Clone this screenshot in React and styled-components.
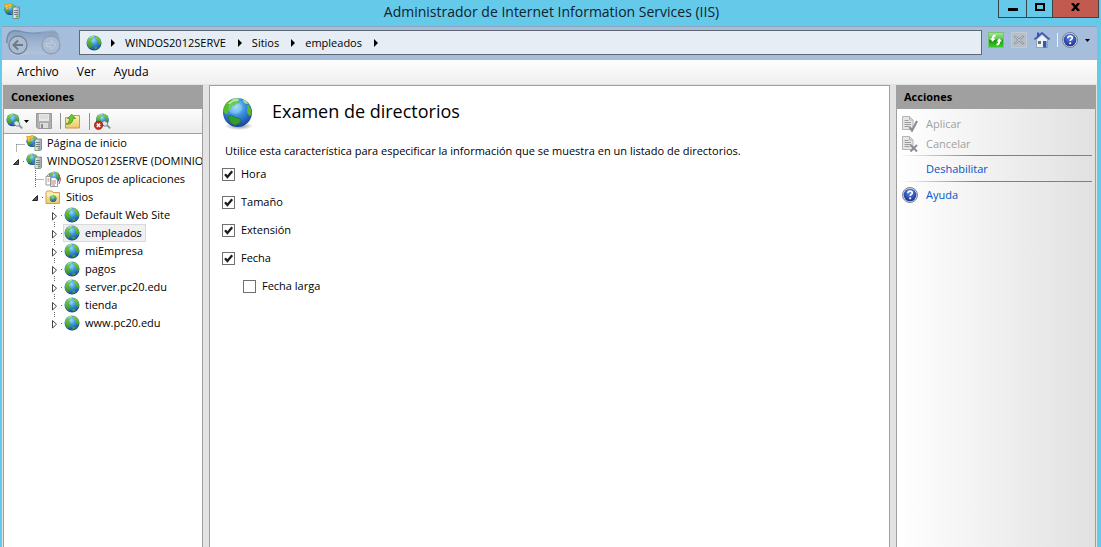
import React, { useState } from 'react';
import styled, { createGlobalStyle } from 'styled-components';

const GlobalStyle = createGlobalStyle`
  * { box-sizing: border-box; }
  body {
    margin: 0;
    background: #65caea;
    color: #000;
    font-family: "Open Sans", "Noto Sans", sans-serif;
    font-size: 11px;
    line-height: 18px;
  }
  button, input { font: inherit; color: inherit; }
  ul, ol { margin: 0; padding: 0; list-style: none; }
`;

/* ---------- window frame ---------- */

const Window = styled.div`
  display: flex;
  flex-direction: column;
  min-height: 100vh;
  background: #65caea;
`;

const TitleBar = styled.header`
  display: grid;
  grid-template-columns: 1fr auto 1fr;
  height: 26px;
  padding: 0 2px 0 4px;
`;

const AppIcon = styled.span`
  display: flex;
  padding-top: 3px;
`;

const WindowTitle = styled.h1`
  margin: 0;
  font-size: 14px;
  font-weight: 400;
  line-height: 24px;
  color: #10222a;
  white-space: nowrap;
`;

const WindowButtons = styled.div`
  display: flex;
  justify-content: flex-end;
`;

const WindowButton = styled.button`
  display: flex;
  align-items: center;
  justify-content: center;
  width: ${(p) => p.$width}px;
  height: 18px;
  margin-left: -1px;
  padding: 0 0 3px;
  border: 1px solid #38454b;
  border-top: 0;
  background: ${(p) => (p.$danger ? '#c25a50' : 'transparent')};
`;

const Frame = styled.div`
  flex: 1;
  display: flex;
  flex-direction: column;
  margin: 0 4px 0 2px;
  background: #e3e3e3;
`;

/* ---------- address bar ---------- */

const AddressRow = styled.div`
  display: flex;
  align-items: flex-start;
  height: 34px;
  padding: 3px 7px 0 4px;
  border-top: 1px solid #8ba6bf;
  background: #a6bedb;
`;

const History = styled.div`
  display: grid;
  width: 56px;
  height: 27px;
  margin-right: 17px;
  > * { grid-area: 1 / 1; }
`;

const HistoryButtons = styled.div`
  display: flex;
  justify-content: space-between;
  align-items: flex-end;
  padding: 0 1px 2px 2px;
`;

const IconButton = styled.button`
  display: flex;
  align-items: center;
  justify-content: center;
  padding: 0;
  border: 0;
  background: none;
`;

const Address = styled.nav`
  flex: 1;
  display: flex;
  align-items: center;
  height: 25px;
  padding-left: 6px;
  border: 1px solid #5f6873;
  background: #e6edf5;
`;

const Crumbs = styled.ol`
  display: flex;
  align-items: center;
  gap: 12px;
  padding-left: 9px;
`;

const Crumb = styled.li`
  display: flex;
  align-items: center;
  gap: 10px;
`;

const CrumbLink = styled.a`
  color: #000;
  text-decoration: none;
`;

const AddressTools = styled.div`
  display: flex;
  align-items: center;
  gap: 7px;
  height: 20px;
  padding-left: 6px;
`;

const Divider = styled.span`
  width: 1px;
  height: 14px;
  background: #eef2f7;
`;

const HelpGroup = styled.span`
  display: flex;
  align-items: center;
  gap: 4px;
`;

/* ---------- menu ---------- */

const MenuBar = styled.nav`
  display: flex;
  align-items: center;
  height: 24px;
  padding-left: 6px;
  background: linear-gradient(#fefefe, #efefef);
`;

const MenuItem = styled.button`
  padding: 0 9px;
  border: 0;
  background: none;
  font-size: 12px;
`;

/* ---------- panels ---------- */

const Body = styled.div`
  flex: 1;
  display: flex;
  gap: 6px;
  padding: 1px 1px 0;
`;

const SidePanel = styled.aside`
  flex: none;
  display: flex;
  flex-direction: column;
  width: 200px;
  border: solid #a0a0a0;
  border-width: 0 1px;
  background: ${(p) => (p.$shaded ? 'linear-gradient(90deg, #fff, #e1e1e1)' : '#fff')};
`;

const PanelTitle = styled.h2`
  margin: 0;
  padding: 0 7px;
  font-size: 11px;
  font-weight: 700;
  line-height: 24px;
  background: #a0a0a0;
`;

const ConnectionTools = styled.div`
  display: flex;
  align-items: center;
  height: 25px;
  padding-left: 2px;
  border-bottom: 1px solid #a0a0a0;
  background: linear-gradient(#fdfdfd, #ececec);
`;

const ToolGroup = styled.span`
  display: flex;
  align-items: center;
  & + & {
    margin-left: 8px;
    padding-left: 4px;
    border-left: 1px solid #909090;
  }
`;

const ConnectGroup = styled.span`
  display: flex;
  align-items: center;
  gap: 1px;
  margin-right: 7px;
`;

/* ---------- tree ---------- */

const Tree = styled.ul`
  overflow: hidden;
`;

const TreeRow = styled.li`
  display: flex;
  height: 18px;
  padding-left: ${(p) => 3 + p.$level * 19}px;
`;

const TreeGuides = styled.svg`
  flex: none;
  width: 18px;
  height: 18px;
`;

const TreeLabel = styled.button`
  display: flex;
  align-items: center;
  gap: 5px;
  height: 18px;
  padding: 0 3px 0 0;
  border: 1px solid ${(p) => (p.$selected ? '#dadada' : 'transparent')};
  background: ${(p) => (p.$selected ? '#f0f0f0' : 'none')};
  line-height: 16px;
  white-space: nowrap;
`;

/* ---------- feature page ---------- */

const Page = styled.main`
  flex: 1;
  min-width: 0;
  padding: 11px 12px;
  border: 1px solid #a0a0a0;
  border-bottom: 0;
  background: #fff;
`;

const PageHeader = styled.div`
  display: flex;
  align-items: center;
  gap: 18px;
`;

const PageTitle = styled.h2`
  margin: 0;
  padding-bottom: 6px;
  font-size: 18px;
  font-weight: 400;
  line-height: 26px;
`;

const Description = styled.p`
  margin: 12px 0 0 3px;
`;

const Options = styled.div`
  display: flex;
  flex-direction: column;
`;

const Option = styled.label`
  display: flex;
  align-items: center;
  gap: 6px;
  height: 28px;
  padding-left: ${(p) => (p.$nested ? 21 : 0)}px;
`;

const CheckBox = styled.span`
  display: grid;
  width: 13px;
  height: 13px;
  > * { grid-area: 1 / 1; }
  svg { pointer-events: none; visibility: hidden; }
  input:checked + svg { visibility: visible; }
`;

const CheckInput = styled.input`
  appearance: none;
  width: 13px;
  height: 13px;
  margin: 0;
  border: 1px solid #707070;
  background: #fff;
`;

/* ---------- actions ---------- */

const ActionList = styled.ul`
  padding: 5px 3px;
`;

const ActionItem = styled.li`
  ${(p) => p.$ruled && `
    margin-top: 1px;
    padding: 3px 0 1px;
    border-top: 1px solid;
    border-image: linear-gradient(90deg, transparent, #808080 40%) 1;
  `}
`;

const ActionButton = styled.button`
  display: flex;
  align-items: center;
  gap: 8px;
  width: 100%;
  height: 20px;
  padding: 0 0 0 2px;
  border: 0;
  background: none;
  color: #0055c8;
  text-align: left;
  &:disabled { color: #a0a0a0; }
`;

const ActionIcon = styled.span`
  display: flex;
  width: 16px;
  height: 16px;
`;

/* ---------- icons ---------- */

const HiddenDefs = styled.svg`
  position: absolute;
`;

const Defs = () => (
  <HiddenDefs width="0" height="0" aria-hidden="true">
    <defs>
      <radialGradient id="sea" cx="0.45" cy="0.3" r="0.72">
        <stop offset="0" stopColor="#93dcfb" />
        <stop offset="0.45" stopColor="#3a8ee0" />
        <stop offset="1" stopColor="#173f9c" />
      </radialGradient>
      <linearGradient id="land" x1="0" y1="0" x2="0" y2="1">
        <stop offset="0" stopColor="#8ad64a" />
        <stop offset="1" stopColor="#2f9426" />
      </linearGradient>
      <linearGradient id="steel" x1="0" y1="0" x2="1" y2="0">
        <stop offset="0" stopColor="#f7f8f9" />
        <stop offset="1" stopColor="#9ba3ab" />
      </linearGradient>
      <linearGradient id="folder" x1="0" y1="0" x2="0" y2="1">
        <stop offset="0" stopColor="#fdf0b4" />
        <stop offset="1" stopColor="#eec866" />
      </linearGradient>
      <linearGradient id="pill" x1="0" y1="0" x2="0" y2="1">
        <stop offset="0" stopColor="#849fc0" />
        <stop offset="0.4" stopColor="#9ab1cd" />
        <stop offset="1" stopColor="#b3c6dd" />
      </linearGradient>
      <linearGradient id="pillEdge" x1="0" y1="0" x2="1" y2="0">
        <stop offset="0" stopColor="#6f8bae" />
        <stop offset="0.6" stopColor="#7b96b8" />
        <stop offset="1" stopColor="#a6bedb" stopOpacity="0" />
      </linearGradient>
      <radialGradient id="helpBlue" cx="0.5" cy="0.3" r="0.7">
        <stop offset="0" stopColor="#5f8be8" />
        <stop offset="1" stopColor="#152f94" />
      </radialGradient>
      <linearGradient id="refreshGreen" x1="0" y1="0" x2="0" y2="1">
        <stop offset="0" stopColor="#a9e59a" />
        <stop offset="0.45" stopColor="#5cc44a" />
        <stop offset="0.5" stopColor="#16940c" />
        <stop offset="1" stopColor="#3fcf2c" />
      </linearGradient>
      <radialGradient id="shade">
        <stop offset="0" stopColor="#555" stopOpacity="0.7" />
        <stop offset="1" stopColor="#555" stopOpacity="0" />
      </radialGradient>
    </defs>
  </HiddenDefs>
);

const GlobeShape = () => (
  <>
    <circle cx="8" cy="8" r="7.5" fill="url(#sea)" />
    <path d="M1.300 5.400C2.200 3.100 4.300 1.300 6.800.900L7.800 2.100 6.300 3.300 6.600 4.500 4.800 5.400 4.900 7.300 6.600 8.600 6.900 10.300 5.300 12.300 4.200 13.500C2.600 12.200 1 10.200.900 7.700Z" fill="url(#land)" />
    <path d="M10 1.200C12.700 2 14.600 4.200 15.200 7L14.900 9.300 13.600 10.600 12.700 9 11.200 8.300 10.800 6.600 12 5.400 10.300 4.500 9.300 2.600Z" fill="url(#land)" />
    <path d="M8.700 11.400 11 11.700 11.700 12.900 9.600 14.500 8.200 13.400Z" fill="#3ba32d" />
    <path d="M4 3.300C5.200 2 6.700 1.500 8.300 1.600" fill="none" stroke="#fff" strokeOpacity="0.500" strokeWidth="0.900" />
  </>
);

const Globe = () => (
  <svg width="16" height="16" viewBox="0 0 16 16" aria-hidden="true"><GlobeShape /></svg>
);

const BigGlobe = () => (
  <svg width="32" height="33" viewBox="0 0 32 33" aria-hidden="true">
    <ellipse cx="17" cy="29" rx="14" ry="4" fill="url(#shade)" />
    <circle cx="15.500" cy="15.500" r="14.500" fill="url(#sea)" />
    <path d="M2 9.500C4 5.500 7.500 2.300 12 1.400l5 .2-1 2.600 1.600 1.700-3.400 1-1.500 2-2.800.4-.8 3.100-2.600 1.400-1.500 3.700-2.300-1.100L1.200 13.800Z" fill="#56bd2c" />
    <path d="M12 1.400l5 .2-1 2.600-4.800.6-3.400 2.400-2.300-.4Z" fill="#c9ecc0" opacity="0.800" />
    <path d="M21 2.600l3.500 2 1.600 2.400-2.300-.2-2.300-1.800Z" fill="#b8e38a" />
    <path d="M26.500 7.500l2.400 4.600.5 4.400-1.400 2.500-2.300-1.700-.9-4.400.9-1.700-.8-2Z" fill="#5cba2a" />
    <path d="M6 19.200l3.600-.9 3 1.800 4.800 1.300 1.800 2-1.800 3.100-4.300 1.800-4.600-2.400Z" fill="#359b2b" stroke="#1d6f36" strokeWidth="0.600" />
    <ellipse cx="13" cy="11" rx="7" ry="6" fill="#c7f1ff" opacity="0.250" />
  </svg>
);

const ServerShape = () => (
  <>
    <path d="M9 5.500l1.500-1.500H15.500V14.500L14.500 15.500H9Z" fill="url(#steel)" stroke="#737b83" strokeWidth="0.800" />
    <path d="M10 7.500h4M10 9.500h4M10 11.500h4" stroke="#6b747c" strokeWidth="0.900" />
    <rect x="12" y="12.800" width="2" height="1.500" fill="#55b53a" />
  </>
);

const ServerGlobe = ({ home }) => (
  <svg width="16" height="16" viewBox="0 0 16 16" aria-hidden="true">
    <g transform="scale(.78)"><GlobeShape /></g>
    {home && (
      <path d="M.5 1.200 3.600 1.700 6.500.500 8 2 6.200 3.600 5 3 3.600 4.200 4.300 6.200 2.400 6.700Z" fill="#ffc933" stroke="#e0951a" strokeWidth="0.700" />
    )}
    <ServerShape />
  </svg>
);

const AppPool = () => (
  <svg width="16" height="16" viewBox="0 0 16 16" aria-hidden="true">
    <g transform="translate(3 0) scale(.78)"><GlobeShape /></g>
    <path d="M13.500 3.500 15.500 8l-1.500 5" fill="none" stroke="#c9423c" strokeWidth="1" />
    <path d="M1 5.500h5v8.500H1ZM5.500 6.500H10L12.500 9v6.500h-7Z" fill="#fff" stroke="#8a9298" strokeWidth="0.900" />
    <path d="M2.500 8h2M2.500 10h2M7 10h4M7 12h4M7 14h3" stroke="#a5605a" strokeWidth="0.800" />
    <path d="M2 5 4 2.500l3.500.500" fill="none" stroke="#8a9298" />
  </svg>
);

const SitesFolder = () => (
  <svg width="16" height="16" viewBox="0 0 16 16" aria-hidden="true">
    <path d="M1 3.500 2 2h5l1 1.500h6.500v11H1Z" fill="url(#folder)" stroke="#c89b3c" strokeWidth="0.900" />
    <path d="M1.500 6h12.500" stroke="#fff8d8" />
    <g transform="translate(4.500 6) scale(.45)"><GlobeShape /></g>
  </svg>
);

const PlugGlobe = ({ remove }) => (
  <svg width={remove ? 18 : 17} height="17" viewBox={remove ? '0 0 18 17' : '0 0 17 17'} aria-hidden="true">
    <g transform={remove ? 'translate(1.500 0) scale(.86)' : 'scale(.86)'}><GlobeShape /></g>
    <path d="M8 8.700l2.800-.9 2.900 2-.2 2.700-2.700.800-2.600-1.900Z" fill="#dfe5e6" stroke="#6b777d" strokeWidth="0.800" />
    <path d="M12.800 12l3.400 3.300" stroke="#7d959c" strokeWidth="1.800" />
    {remove && (
      <>
        <circle cx="4.500" cy="12.300" r="4.200" fill="#cf2a22" stroke="#8f1712" strokeWidth="0.600" />
        <path d="M2.800 10.600l3.400 3.400M6.200 10.600l-3.400 3.400" stroke="#fff" strokeWidth="1.500" />
      </>
    )}
  </svg>
);

const Floppy = () => (
  <svg width="16" height="16" viewBox="0 0 16 16" aria-hidden="true">
    <path d="M.5.500h15v15H2L.500 14Z" fill="#aeaeae" stroke="#9a9a9a" />
    <rect x="3" y="1" width="10" height="7" fill="#e8e8e8" />
    <path d="M4 3h8M4 5h8" stroke="#d2d2d2" />
    <rect x="4" y="10" width="8" height="5" fill="#dcdcdc" />
    <rect x="5" y="11" width="2" height="4" fill="#8d8d8d" />
  </svg>
);

const FolderUp = () => (
  <svg width="16" height="16" viewBox="0 0 16 16" aria-hidden="true">
    <path d="M.5 4.500h6L8.500 2.500h6v12.500H.5Z" fill="url(#folder)" stroke="#c49537" strokeWidth="0.900" />
    <path d="M1 11C3.500 10.500 4.500 8.500 4.600 5.500H2.500L6.800 1.200 10.500 5.500H8C7.900 9 5.500 12 1 11Z" fill="#6cc62d" stroke="#348f1a" strokeWidth="0.700" />
  </svg>
);

const HelpIcon = () => (
  <svg width="16" height="16" viewBox="0 0 16 16" aria-hidden="true">
    <circle cx="8" cy="8" r="7.500" fill="#d6dbe3" stroke="#6e7684" strokeWidth="0.900" />
    <circle cx="8" cy="8" r="6.300" fill="url(#helpBlue)" />
    <path d="M5.800 6.300C5.900 4.700 6.900 4.100 8.100 4.100c1.300 0 2.200.7 2.200 1.800 0 1.500-2.100 1.600-2.100 3.200" fill="none" stroke="#fff" strokeWidth="1.600" />
    <rect x="7.300" y="10.400" width="1.800" height="1.800" fill="#fff" />
  </svg>
);

const RefreshIcon = () => (
  <svg width="16" height="16" viewBox="0 0 16 16" aria-hidden="true">
    <rect x="0.500" y="0.500" width="15" height="15" fill="url(#refreshGreen)" stroke="#7cc273" />
    <path d="M7.500 3.500C5.500 3.500 4.700 4.500 4.700 7" fill="none" stroke="#fff" strokeWidth="1.800" />
    <path d="M1.800 6.500h5.800L4.700 9.800Z" fill="#fff" />
    <path d="M8.500 12.700c2 0 2.800-1.200 2.800-3.700" fill="none" stroke="#fff" strokeWidth="1.800" />
    <path d="M8.400 9.500h5.800l-2.900-3.300Z" fill="#fff" />
  </svg>
);

const StopIcon = () => (
  <svg width="16" height="16" viewBox="0 0 16 16" aria-hidden="true">
    <rect x="0.500" y="0.500" width="15" height="15" fill="#b7bfc8" stroke="#c3cad3" />
    <path d="M3.500 4l9 8M12.500 4l-9 8" stroke="#8b929c" strokeWidth="2.200" />
    <path d="M4 4.300l8 7.200M12 4.500 4 11.600" stroke="#d5dae0" strokeWidth="0.800" />
  </svg>
);

const HomeIcon = () => (
  <svg width="16" height="16" viewBox="0 0 16 16" aria-hidden="true">
    <path d="M3 .500h2.200v4H3Z" fill="#3a55b8" />
    <path d="M2.500 7.500 8 2.500l5.500 5v8h-11Z" fill="#eef1f5" stroke="#8c95a3" strokeWidth="0.800" />
    <path d="M.5 7.500 8 1l7.500 6.500" fill="none" stroke="#3450b8" strokeWidth="1.600" />
    <rect x="4" y="9" width="3" height="3" fill="#5a6e8c" />
    <rect x="9" y="9" width="3.500" height="6.500" fill="#2a5cb0" />
  </svg>
);

const PageMark = ({ cross }) => (
  <svg width="16" height="16" viewBox="0 0 16 16" aria-hidden="true">
    <path d="M.5.500h7L11 4v9.500H.5Z" fill="#e6e6e6" stroke="#b4b4b4" />
    <path d="M7.500.500V4H11" fill="none" stroke="#b4b4b4" />
    <path d="M2.500 4.500h4M2.500 6.500h6.500M2.500 8.500h6.500M2.500 10.500h5" stroke="#9c9c9c" />
    {cross
      ? <path d="M8.500 9l6.500 6.500M15 9 8.500 15.500" stroke="#8e8e8e" strokeWidth="2" />
      : <path d="M7.500 11l2.500 3.500 5-9.500" fill="none" stroke="#8e8e8e" strokeWidth="2.200" />}
  </svg>
);

const Caret = () => (
  <svg width="5" height="3" viewBox="0 0 5 3" aria-hidden="true"><path d="M0 0h5L2.500 3Z" /></svg>
);

const CrumbArrow = () => (
  <svg width="4" height="8" viewBox="0 0 4 8" aria-hidden="true"><path d="M0 0 4 4 0 8Z" /></svg>
);

const HistoryPill = () => (
  <svg width="56" height="27" viewBox="0 0 56 27" aria-hidden="true">
    <path d="M9 .500C16 .500 18 3 28 3S41 .500 47 .500C52 .500 54 6 54 13S53 25 45 25C38 25 36 24 28 24S18 25.500 11 25.500C3 25.500.500 20 .500 13S3 .500 9 .500Z" fill="url(#pill)" />
    <path d="M.8 13C.8 4 4 .800 9 .800 16 .800 18 3.300 28 3.300S41 .800 47 .800C50 .800 52 2 53.500 5" fill="none" stroke="url(#pillEdge)" strokeWidth="1.500" />
  </svg>
);

const HistoryArrow = ({ forward }) => (
  <svg width="20" height="20" viewBox="0 0 20 20" aria-hidden="true">
    <circle cx="10" cy="10" r="9" fill="#a9bcd3" stroke={forward ? '#919eb0' : '#79828e'} strokeWidth="1.300" />
    <path
      d={forward ? 'M5 8.500h5V5.500l5 4.500-5 4.500V11.500H5Z' : 'M15 10H6M10 5.500 5.500 10l4.500 4.500'}
      fill="none"
      stroke={forward ? '#c3cfde' : '#707884'}
      strokeWidth={forward ? 1 : 2}
    />
  </svg>
);

const CheckMark = () => (
  <svg width="13" height="13" viewBox="0 0 13 13" aria-hidden="true">
    <path d="M3 6.300 5.400 9 10.200 3.300" fill="none" stroke="#1e1e1e" strokeWidth="2.300" />
  </svg>
);

const guidePaths = {
  root: 'M9.500 10.500H18M9.500 10.500V18',
  open: 'M16 9.500h2',
  branch: 'M9.500 0V18M9.500 9.500H18',
  closed: 'M9.500 0V4M9.500 16V18M16 9.500h2',
  last: 'M9.500 0V4M16 9.500h2',
};

const Guides = ({ kind }) => (
  <TreeGuides viewBox="0 0 18 18" aria-hidden="true">
    <path d={guidePaths[kind]} fill="none" stroke="#6a6a6a" strokeDasharray="1 1" />
    {kind === 'open' && <path d="M11.500 7.500v5h-5Z" fill="#595959" stroke="#262626" />}
    {(kind === 'closed' || kind === 'last') && (
      <path d="M7.500 6.500v7.500l4-3.800Z" fill="#fff" stroke="#444" />
    )}
  </TreeGuides>
);

/* ---------- data ---------- */

const sites = ['Default Web Site', 'empleados', 'miEmpresa', 'pagos', 'server.pc20.edu', 'tienda', 'www.pc20.edu'];

const treeRows = [
  { label: 'Página de inicio', level: 0, guide: 'root', icon: <ServerGlobe home /> },
  { label: 'WINDOS2012SERVE (DOMINIO', level: 0, guide: 'open', icon: <ServerGlobe /> },
  { label: 'Grupos de aplicaciones', level: 1, guide: 'branch', icon: <AppPool /> },
  { label: 'Sitios', level: 1, guide: 'open', icon: <SitesFolder /> },
  ...sites.map((label, i) => ({
    label,
    level: 2,
    guide: i === sites.length - 1 ? 'last' : 'closed',
    icon: <Globe />,
  })),
];

const crumbs = ['WINDOS2012SERVE', 'Sitios', 'empleados'];

const options = [
  { label: 'Hora', checked: true },
  { label: 'Tamaño', checked: true },
  { label: 'Extensión', checked: true },
  { label: 'Fecha', checked: true },
  { label: 'Fecha larga', checked: false, nested: true },
];

const actions = [
  { label: 'Aplicar', disabled: true, icon: <PageMark /> },
  { label: 'Cancelar', disabled: true, icon: <PageMark cross /> },
  { label: 'Deshabilitar', ruled: true },
  { label: 'Ayuda', ruled: true, icon: <HelpIcon /> },
];

export default function App() {
  const [selected, setSelected] = useState('empleados');

  return (
    <Window>
      <GlobalStyle />
      <Defs />
      <TitleBar>
        <AppIcon><ServerGlobe home /></AppIcon>
        <WindowTitle>Administrador de Internet Information Services (IIS)</WindowTitle>
        <WindowButtons>
          <WindowButton $width={29} aria-label="Minimizar">
            <svg width="10" height="10"><rect y="6" width="10" height="3" /></svg>
          </WindowButton>
          <WindowButton $width={27} aria-label="Maximizar">
            <svg width="10" height="8"><rect x="1" y="1" width="8" height="6" fill="none" stroke="#000" strokeWidth="2" /></svg>
          </WindowButton>
          <WindowButton $width={47} $danger aria-label="Cerrar">
            <svg width="9" height="8"><path d="M1 0 8 8M8 0 1 8" stroke="#000" strokeWidth="2.400" /></svg>
          </WindowButton>
        </WindowButtons>
      </TitleBar>

      <Frame>
        <AddressRow>
          <History>
            <HistoryPill />
            <HistoryButtons>
              <IconButton aria-label="Atrás"><HistoryArrow /></IconButton>
              <IconButton aria-label="Adelante"><HistoryArrow forward /></IconButton>
            </HistoryButtons>
          </History>
          <Address aria-label="Ruta">
            <Globe />
            <Crumbs>
              {crumbs.map((name) => (
                <Crumb key={name}>
                  <CrumbArrow />
                  <CrumbLink href="#">{name}</CrumbLink>
                </Crumb>
              ))}
              <Crumb><CrumbArrow /></Crumb>
            </Crumbs>
          </Address>
          <AddressTools>
            <IconButton aria-label="Actualizar"><RefreshIcon /></IconButton>
            <IconButton aria-label="Detener"><StopIcon /></IconButton>
            <IconButton aria-label="Inicio"><HomeIcon /></IconButton>
            <HelpGroup>
              <Divider />
              <IconButton aria-label="Ayuda"><HelpIcon /></IconButton>
            </HelpGroup>
            <IconButton aria-label="Opciones de ayuda"><Caret /></IconButton>
          </AddressTools>
        </AddressRow>

        <MenuBar aria-label="Menú">
          <MenuItem>Archivo</MenuItem>
          <MenuItem>Ver</MenuItem>
          <MenuItem>Ayuda</MenuItem>
        </MenuBar>

        <Body>
          <SidePanel>
            <PanelTitle>Conexiones</PanelTitle>
            <ConnectionTools>
              <ToolGroup>
                <ConnectGroup>
                  <IconButton aria-label="Conectar"><PlugGlobe /></IconButton>
                  <IconButton aria-label="Opciones de conexión"><Caret /></IconButton>
                </ConnectGroup>
                <IconButton aria-label="Guardar"><Floppy /></IconButton>
              </ToolGroup>
              <ToolGroup>
                <IconButton aria-label="Subir"><FolderUp /></IconButton>
              </ToolGroup>
              <ToolGroup>
                <IconButton aria-label="Quitar conexión"><PlugGlobe remove /></IconButton>
              </ToolGroup>
            </ConnectionTools>
            <Tree>
              {treeRows.map((row) => (
                <TreeRow key={row.label} $level={row.level}>
                  <Guides kind={row.guide} />
                  <TreeLabel $selected={selected === row.label} onClick={() => setSelected(row.label)}>
                    {row.icon}
                    {row.label}
                  </TreeLabel>
                </TreeRow>
              ))}
            </Tree>
          </SidePanel>

          <Page>
            <PageHeader>
              <BigGlobe />
              <PageTitle>Examen de directorios</PageTitle>
            </PageHeader>
            <Description>
              Utilice esta característica para especificar la información que se muestra en un listado de directorios.
            </Description>
            <Options>
              {options.map((option) => (
                <Option key={option.label} $nested={option.nested}>
                  <CheckBox>
                    <CheckInput type="checkbox" defaultChecked={option.checked} />
                    <CheckMark />
                  </CheckBox>
                  {option.label}
                </Option>
              ))}
            </Options>
          </Page>

          <SidePanel $shaded>
            <PanelTitle>Acciones</PanelTitle>
            <ActionList>
              {actions.map((action) => (
                <ActionItem key={action.label} $ruled={action.ruled}>
                  <ActionButton disabled={action.disabled}>
                    <ActionIcon>{action.icon}</ActionIcon>
                    {action.label}
                  </ActionButton>
                </ActionItem>
              ))}
            </ActionList>
          </SidePanel>
        </Body>
      </Frame>
    </Window>
  );
}
